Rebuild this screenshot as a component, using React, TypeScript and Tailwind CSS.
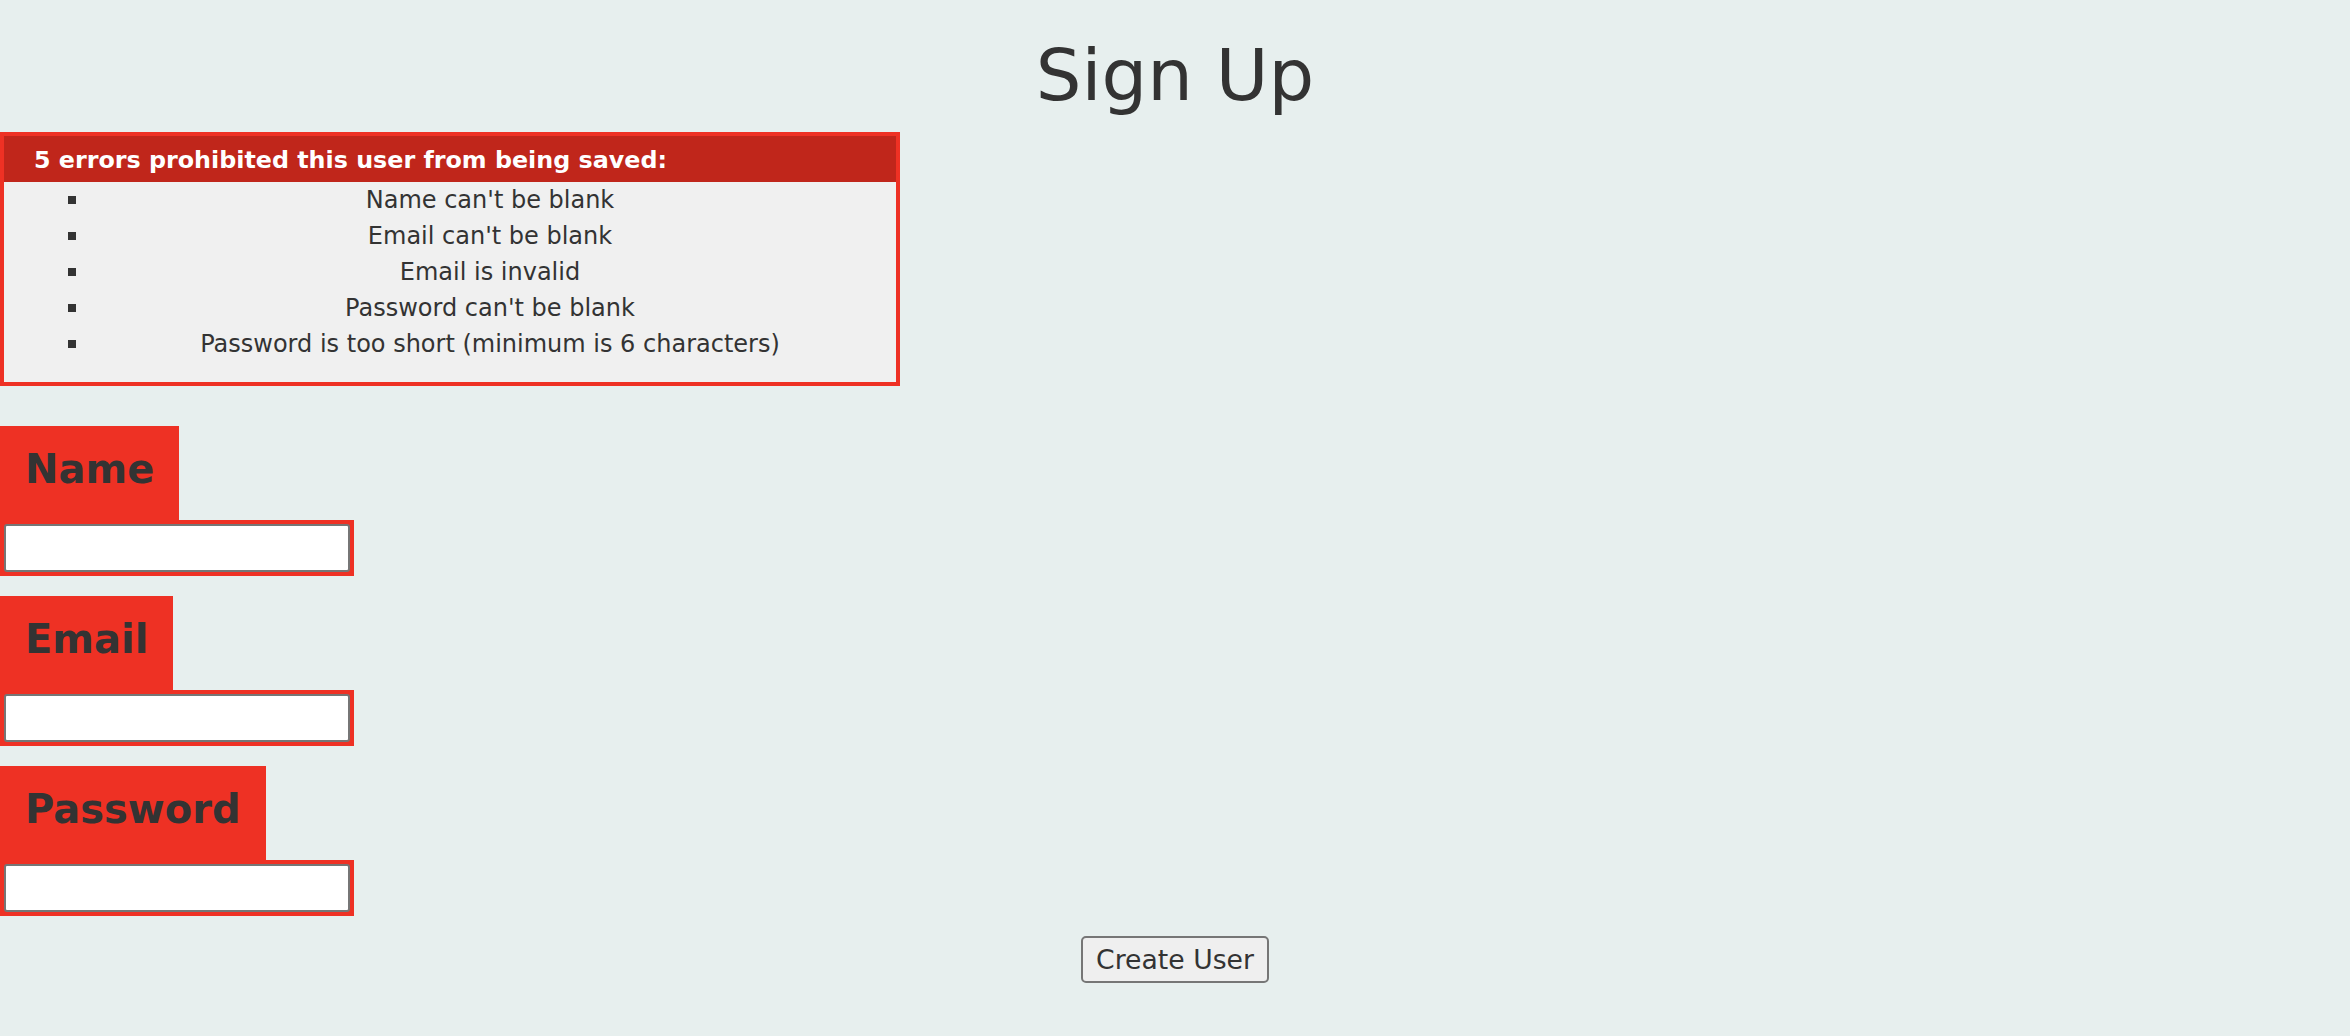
import React from 'react';

const errors = [
  "Name can't be blank",
  "Email can't be blank",
  'Email is invalid',
  "Password can't be blank",
  'Password is too short (minimum is 6 characters)',
];

const fields = [
  { id: 'user_name', label: 'Name', type: 'text' },
  { id: 'user_email', label: 'Email', type: 'email' },
  { id: 'user_password', label: 'Password', type: 'password' },
];

export default function App() {
  return (
    <div className="min-h-screen bg-[#e7efee] text-[#333] font-['DejaVu_Sans','Liberation_Sans',sans-serif]">
      <h1 className="pt-[33px] text-center text-[72px] leading-[84px] font-normal">Sign Up</h1>

      <form className="mt-[15px]">
        <div className="w-[900px] border-4 border-[#ee3124] bg-[#f0f0f0] px-[14px] pt-[14px] mb-[40px]">
          <h2 className="-mx-[14px] -mt-[14px] bg-[#c0261b] pt-[11px] pb-[9px] pl-[30px] text-[23.8px] font-bold leading-[26px] text-white">
            5 errors prohibited this user from being saved:
          </h2>
          <ul className="pl-[50px] pb-[20px] text-[24px] leading-[36px]">
            {errors.map((msg) => (
              <li key={msg} className="flex items-center">
                <span className="h-[8px] w-[8px] shrink-0 bg-[#333]" />
                <span className="ml-[22px] flex-1 text-center">{msg}</span>
              </li>
            ))}
          </ul>
        </div>

        <div className="flex flex-col gap-[20px]">
          {fields.map((f) => (
            <div key={f.id} className="flex flex-col items-start">
              <label
                htmlFor={f.id}
                className="bg-[#ee3124] px-[25px] pt-[21px] pb-[28px] text-[40px] font-bold leading-[45px]"
              >
                {f.label}
              </label>
              <div className="w-[354px] bg-[#ee3124] p-[4px]">
                <input
                  id={f.id}
                  type={f.type}
                  className="block h-[48px] w-full rounded-[3px] border-2 border-[#767676] bg-white"
                />
              </div>
            </div>
          ))}
        </div>

        <div className="mt-[20px] text-center">
          <button
            type="submit"
            className="h-[47px] rounded-[5px] border-2 border-[#767676] bg-[#efefef] px-[13px] text-[26.67px] leading-[32px] text-[#333]"
          >
            Create User
          </button>
        </div>
      </form>
    </div>
  );
}
